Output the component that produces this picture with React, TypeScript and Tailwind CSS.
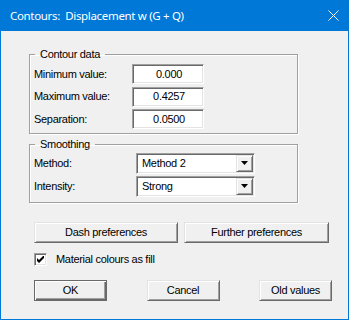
import React from "react";

const dlgFont = { fontFamily: '"Liberation Sans", Arial, sans-serif' };

const sunken =
  "border border-t-[#a0a0a0] border-l-[#a0a0a0] border-b-white border-r-white shadow-[inset_1px_1px_0_#696969,inset_-1px_-1px_0_#e3e3e3]";
const raised =
  "border border-t-[#e3e3e3] border-l-[#e3e3e3] border-b-[#696969] border-r-[#696969] shadow-[inset_1px_1px_0_#fff,inset_-1px_-1px_0_#a0a0a0]";

const GroupBox = ({
  title,
  className,
  children,
}: {
  title: string;
  className?: string;
  children: React.ReactNode;
}) => (
  <fieldset
    className={`w-[269px] ml-[28px] border border-[#a0a0a0] shadow-[inset_1px_1px_0_#fff,1px_1px_0_#fff] pl-[4px] ${className ?? ""}`}
  >
    <legend className="ml-[1px] px-[5px] leading-[14px]">{title}</legend>
    {children}
  </fieldset>
);

const EditRow = ({ label, value }: { label: string; value: string }) => (
  <div className="flex items-center h-[20px]">
    <span className="w-[98px]">{label}</span>
    <div
      className={`w-[72px] h-[20px] bg-white flex items-center justify-center pl-[2px] ${sunken}`}
    >
      {value}
    </div>
  </div>
);

const ComboRow = ({ label, value }: { label: string; value: string }) => (
  <div className="flex items-center h-[20px]">
    <span className="w-[102px]">{label}</span>
    <div
      className={`w-[119px] h-[21px] bg-white flex items-center p-[1px] ${sunken}`}
    >
      <span className="flex-1 pl-[4px]">{value}</span>
      <div
        className={`w-[17px] h-[17px] bg-[#f0f0f0] flex items-center justify-center ${raised}`}
      >
        <svg width="7" height="4" viewBox="0 0 7 4">
          <path d="M0 0h7L3.5 4z" fill="#000" />
        </svg>
      </div>
    </div>
  </div>
);

const Button = ({
  children,
  className,
  isDefault,
}: {
  children: React.ReactNode;
  className?: string;
  isDefault?: boolean;
}) =>
  isDefault ? (
    <div
      className={`h-[21px] bg-[#f0f0f0] border border-[#696969] shadow-[inset_1px_1px_0_#fff,inset_-1px_-1px_0_#696969,inset_-2px_-2px_0_#a0a0a0] flex items-center justify-center ${className ?? ""}`}
    >
      {children}
    </div>
  ) : (
    <div
      className={`h-[21px] bg-[#f0f0f0] flex items-center justify-center ${raised} ${className ?? ""}`}
    >
      {children}
    </div>
  );

export default function App() {
  return (
    <div className="w-[349px] h-[320px] bg-[#0078d7] flex flex-col px-[1px] pb-[1px]">
      <div
        className="h-[31px] flex items-center justify-between pl-[9px] text-white text-[11.5px] tracking-[-0.33px]"
        style={{ fontFamily: '"Noto Sans", "Open Sans", sans-serif' }}
      >
        <span>Contours:&nbsp; Displacement w (G + Q)</span>
        <svg width="11" height="11" viewBox="0 0 11 11" className="mr-[9px]">
          <path d="M0.5 0.5l10 10M10.5 0.5l-10 10" stroke="#fff" strokeWidth="1" />
        </svg>
      </div>

      <div
        className="flex-1 bg-[#f0f0f0] flex flex-col pt-[16px] text-[11px] text-black tracking-[-0.3px]"
        style={dlgFont}
      >
        <GroupBox title="Contour data" className="pt-[3px] pb-[4px]">
          <div className="flex flex-col gap-[2.5px]">
            <EditRow label="Minimum value:" value="0.000" />
            <EditRow label="Maximum value:" value="0.4257" />
            <EditRow label="Separation:" value="0.0500" />
          </div>
        </GroupBox>

        <GroupBox title="Smoothing" className="mt-[3px] pt-[2px] pb-[6px]">
          <div className="flex flex-col gap-[3px]">
            <ComboRow label="Method:" value="Method 2" />
            <ComboRow label="Intensity:" value="Strong" />
          </div>
        </GroupBox>

        <div className="flex gap-[6px] ml-[33px] mt-[19px]">
          <Button className="w-[144px]">Dash preferences</Button>
          <Button className="w-[145px]">Further preferences</Button>
        </div>

        <div className="flex items-center ml-[33px] mt-[10px] h-[13px]">
          <div className={`w-[13px] h-[13px] bg-white flex items-center justify-center ${sunken}`}>
            <svg width="7" height="7" viewBox="0 0 7 7">
              <path d="M0 2v3l2 2L7 2V-1L2 4z" fill="#000" />
            </svg>
          </div>
          <span className="ml-[9px]">Material colours as fill</span>
        </div>

        <div className="flex justify-between ml-[33px] w-[298px] mt-[14px]">
          <Button isDefault className="w-[73px]">OK</Button>
          <Button className="w-[73px]">Cancel</Button>
          <Button className="w-[73px]">Old values</Button>
        </div>
      </div>
    </div>
  );
}
